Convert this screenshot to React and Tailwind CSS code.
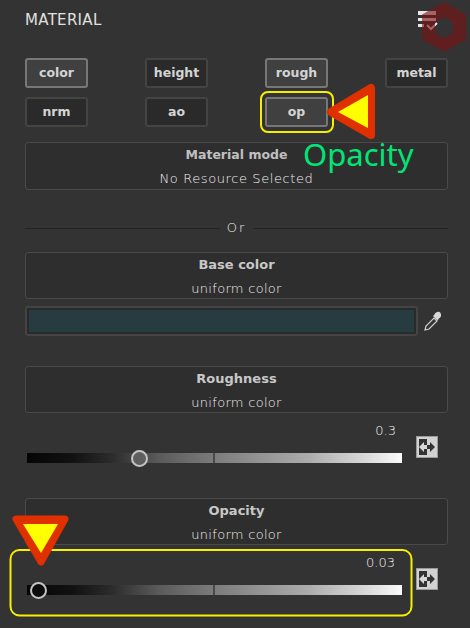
const font = { fontFamily: '"DejaVu Sans", "Noto Sans CJK JP", sans-serif' };

function Btn({ label, active }) {
  return (
    <div className={`h-[30px] w-[63px] rounded-[3px] border-2 flex items-center justify-center text-[12.5px] font-bold text-[#d4d4d4] ${active ? "bg-[#404040] border-[#777777]" : "bg-[#2a2a2a] border-[#444444]"}`}>
      {label}
    </div>
  );
}

function Group({ title, sub, className = "" }) {
  return (
    <div className={`w-[423px] h-[47px] rounded-[3px] border border-[#4a4a4a] bg-[#2e2e2e] flex flex-col items-center pt-[2px] ${className}`}>
      <div className="h-[22px] leading-[20px] text-[13px] font-bold text-[#c8c8c8]">{title}</div>
      <div className="h-[22px] leading-[26px] text-[13px] font-light text-[#f0f0f0] tracking-[0.3px]">{sub}</div>
    </div>
  );
}

function SwapIcon() {
  return (
    <svg width="22" height="22" viewBox="0 0 22 22" className="shrink-0">
      <rect x="0.5" y="0.5" width="21" height="21" fill="#d2d2d2" stroke="#9a9a9a" />
      <rect x="3" y="3" width="8" height="16" fill="#333333" />
      <path d="M3 11l5-5v3h3v4H8v3z" fill="#d8d8d8" />
      <path d="M19 11l-5-5v3h-3v4h3v3z" fill="#333333" />
    </svg>
  );
}

function Slider({ value, knobX, knobFill, valueRight }) {
  return (
    <div className="flex w-[423px] items-start">
      <div className="w-[375px] ml-[2px]">
        <div className="h-[20px] text-right text-[13px] font-light leading-[20px] text-[#f0f0f0]" style={{ paddingRight: valueRight }}>{value}</div>
        <div className="relative mt-[12px] h-[10px] bg-[linear-gradient(90deg,#050505_0%,#111111_12%,#2a2a2a_22%,#5a5a5a_35%,#7c7c7c_50%,#acacac_75%,#d8d8d8_90%,#fafafa_100%)]">
          <div className="absolute left-[186px] top-0 h-full w-[2px] bg-[#4a4a4a]" />
          <div
            className="absolute top-[-3px] h-[17px] w-[17px] rounded-full border-2 border-[#c4c4c4]"
            style={{ left: knobX, backgroundColor: knobFill }}
          />
        </div>
      </div>
      <div className="ml-[14px] mt-[15px]"><SwapIcon /></div>
    </div>
  );
}

export default function App() {
  return (
    <div className="relative w-[470px] h-[628px] overflow-hidden bg-[#333333] pl-[25px]" style={font}>
      <div className="flex h-[58px] items-start">
        <div className="pt-[11px] text-[15px] leading-[18px] tracking-[0.3px] text-[#e0e0e0]">MATERIAL</div>
      </div>

      <div className="grid w-[423px] grid-cols-[63px_63px_63px_63px] justify-between gap-y-[9px]">
        <Btn label="color" active />
        <Btn label="height" />
        <Btn label="rough" active />
        <Btn label="metal" />
        <Btn label="nrm" />
        <Btn label="ao" />
        <Btn label="op" active />
      </div>

      <div className="mt-[15px] w-[423px] h-[48px] rounded-[3px] border border-[#4a4a4a] bg-[#2e2e2e] flex flex-col items-center pt-[2px]">
        <div className="h-[22px] leading-[20px] text-[12.5px] font-bold text-[#c0c0c0]">Material mode</div>
        <div className="h-[22px] leading-[24px] text-[13px] font-light text-[#f0f0f0] tracking-[0.6px]">No Resource Selected</div>
      </div>

      <div className="mt-[30px] flex h-[16px] w-[423px] items-center">
        <div className="h-px flex-1 bg-[#232323]" />
        <div className="w-[34px] text-center text-[13px] font-light tracking-[2px] text-[#f0f0f0]">Or</div>
        <div className="h-px flex-1 bg-[#232323]" />
      </div>

      <Group title="Base color" sub="uniform color" className="mt-[16px]" />

      <div className="mt-[7px] flex w-[423px] items-center">
        <div className="h-[30px] w-[393px] rounded-[3px] border-2 border-[#444444] bg-[#2a2a2a] p-[2px]">
          <div className="h-full w-full bg-[#263c40]" />
        </div>
        <svg width="20" height="20" viewBox="0 0 20 20" className="ml-[5px]">
          <path d="M2 19l1-4 8-8 3 3-8 8z" fill="none" stroke="#d0d0d0" strokeWidth="1.2" />
          <path d="M10 5l1.500-1.500c1-3 5-3.500 6-1.500s1 4-1.500 5.500L14.500 9.500z" fill="#d8d8d8" />
        </svg>
      </div>

      <Group title="Roughness" sub="uniform color" className="mt-[30px]" />

      <div className="mt-[8px]">
        <Slider value="0.3" knobX={104} knobFill="#5e5e5e" valueRight={6} />
      </div>

      <Group title="Opacity" sub="uniform color" className="mt-[35px]" />

      <div className="mt-[8px]">
        <Slider value="0.03" knobX={3} knobFill="#0c0c0c" valueRight={7} />
      </div>

      {/* watermark and annotations drawn over the panel */}
      <svg width="470" height="628" viewBox="0 0 470 628" className="pointer-events-none absolute left-0 top-0">
        <g fill="#e8e8e8">
          <rect x="418" y="11" width="18" height="4" />
          <rect x="418" y="18" width="18" height="3" />
          <rect x="418" y="24" width="6" height="3" />
        </g>
        <path d="M427 25l4 4 6-6" fill="none" stroke="#e8e8e8" strokeWidth="2" />
        <path
          fillRule="evenodd"
          d="M444 2l22 12.500v25L444 52l-22-12.500v-25zM444 17l-9 5v11l9 5 9-5V22z"
          fill="#7d1414"
          fillOpacity="0.62"
        />
        <rect x="261" y="92" width="72" height="40" rx="7" fill="none" stroke="#f5f000" strokeWidth="2" />
        <rect x="10.500" y="550" width="401" height="65.500" rx="9" fill="none" stroke="#f5f000" strokeWidth="2" />
        <polygon points="331,112 371,88 371,135" fill="#e03000" stroke="#e03000" strokeWidth="8" strokeLinejoin="round" />
        <polygon points="338,112 368,95 368,128" fill="#ffff00" />
        <polygon points="16,519 65,519 41,562" fill="#e03000" stroke="#e03000" strokeWidth="7" strokeLinejoin="round" />
        <polygon points="23,524 58,524 41,553" fill="#ffff00" />
      </svg>
      <div className="absolute left-[303px] top-[134px] text-[31px] leading-[40px] text-[#00e676]" style={{ fontFamily: '"Noto Sans", sans-serif' }}>Opacity</div>
    </div>
  );
}
